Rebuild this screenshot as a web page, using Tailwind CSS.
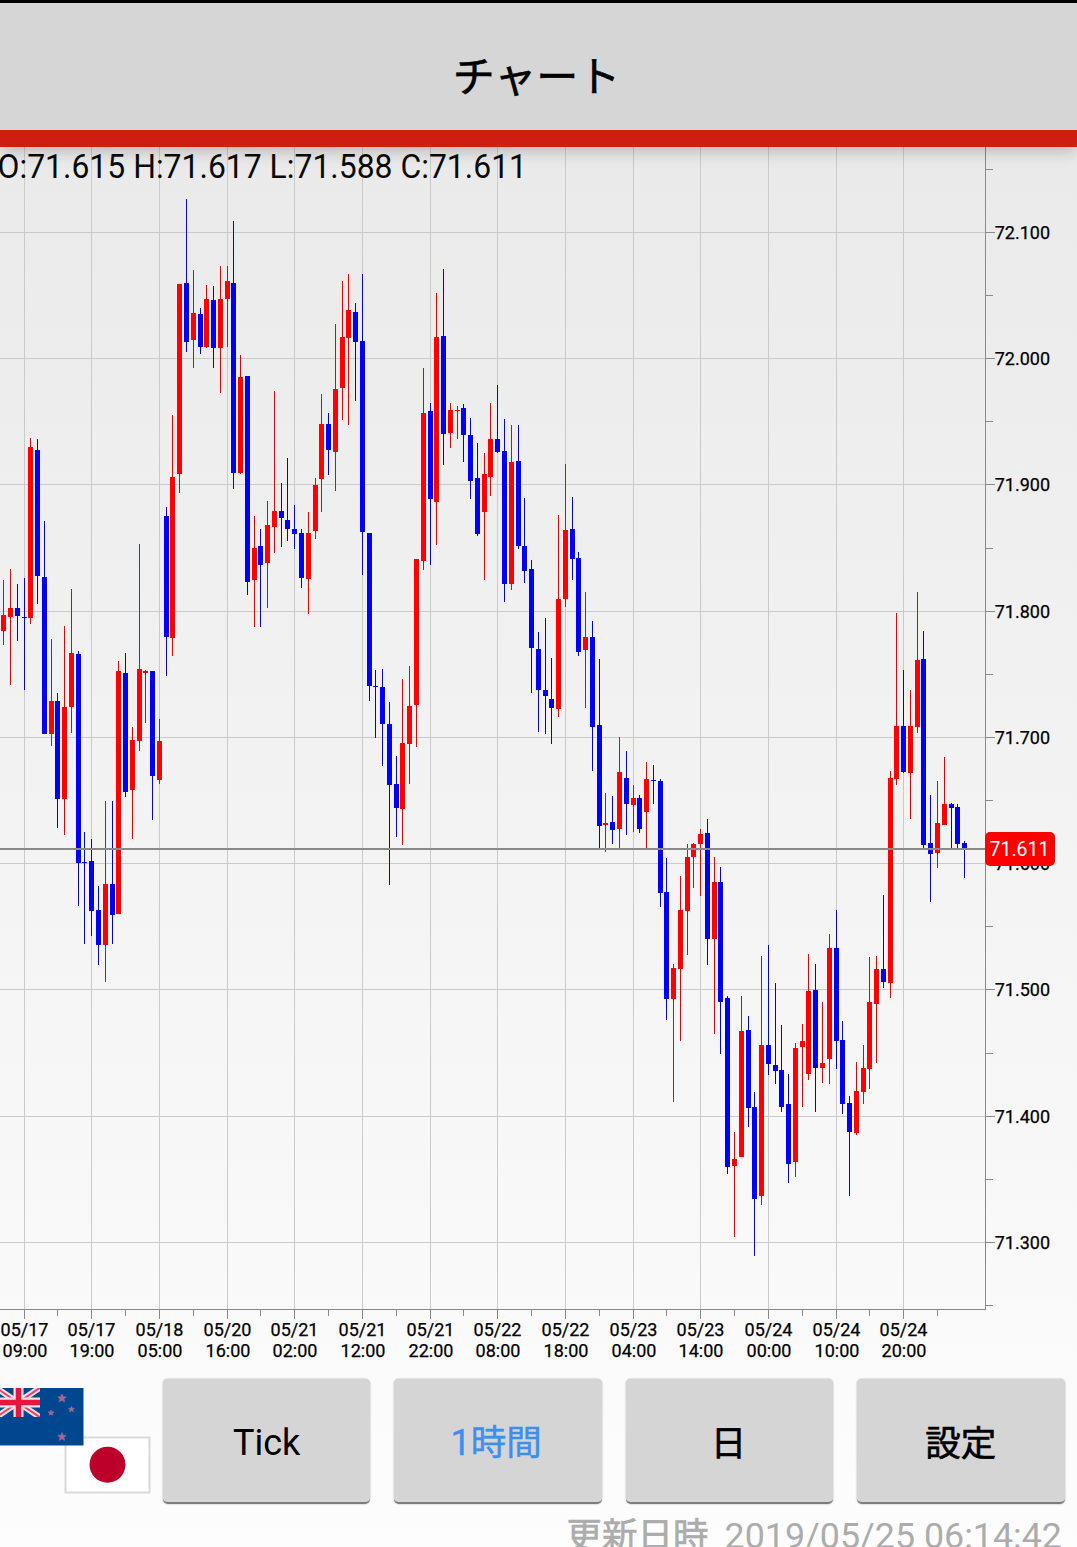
<!DOCTYPE html>
<html lang="ja">
    <head>
        <meta charset="UTF-8">
        <title>チャート</title>
        <script src="https://cdn.jsdelivr.net/npm/@tailwindcss/browser@4"></script>
    </head>
    <body class="bg-white">
        <div id="main" class="flex flex-col w-[1077px] h-[1547px] overflow-hidden bg-linear-to-b from-[#e8e8e8] to-[#fdfdfd] font-['Roboto','Noto_Sans_CJK_JP',sans-serif] text-black">
            <header class="relative z-10 flex items-center justify-center h-[147px] shrink-0 bg-[#d6d6d6] border-t-3 border-t-black border-b-[17px] border-b-[#d01d13] shadow-[0_3px_16px_rgba(0,0,0,0.25)]">
                <h1 class="text-[42px] leading-none pt-[22px] pr-[4px] [-webkit-text-stroke:0.6px_#000]">チャート</h1>
            </header>
            <svg id="chart" class="block shrink-0 w-[1077px] h-[1231px]" viewBox="0 147 1077 1231">
                <g id="grid" fill="#cacaca" shape-rendering="crispEdges"></g>
                <g id="candles" shape-rendering="crispEdges"></g>
                <g id="axis" fill="#8a8a8a" shape-rendering="crispEdges">
                    <rect x="985" y="147" width="1" height="1163"/>
                    <rect x="0" y="1309" width="986" height="1"/>
                    <rect x="0" y="848" width="986" height="2"/>
                </g>
                <g id="labels" font-size="18" fill="#000" stroke="#000" stroke-width=".25"></g>
                <rect x="985" y="832" width="70" height="34" rx="5" fill="#ff0000"/>
                <text x="1019.5" y="856" text-anchor="middle" font-size="19.5" fill="#fff">71.611</text>
                <text id="ohlc" x="-2.500" y="178" font-size="33" textLength="529.500" lengthAdjust="spacingAndGlyphs" fill="#0a0a0a">O:71.615 H:71.617 L:71.588 C:71.611</text>
            </svg>
            <footer class="flex shrink-0">
                <svg class="block shrink-0 w-[163px] h-[126px]" viewBox="0 1378 163 126">
                    <rect x="65.5" y="1437.5" width="84" height="55" fill="#fff" stroke="#d9d9d9" stroke-width="2"/>
                    <circle cx="107.5" cy="1464.7" r="18" fill="#bd0029"/>
                    <rect x="-3" y="1388" width="86.5" height="57.5" fill="#00478f"/>
                    <svg x="-3" y="1388" width="43" height="29" viewBox="0 0 43 29" preserveAspectRatio="none">
                        <path d="M-2 -1L44 30M-2 30L44 -1" stroke="#f3dce4" stroke-width="6"/>
                        <path d="M-2 -1L44 30M-2 30L44 -1" stroke="#e8476a" stroke-width="2"/>
                        <path d="M21.5 0V29M0 14.5H43" stroke="#f6e3ea" stroke-width="10"/>
                        <path d="M21.5 0V29M0 14.5H43" stroke="#e8163c" stroke-width="5.5"/>
                    </svg>
                    <g id="stars" fill="#d0567c" stroke="#6f7fb0" stroke-width=".6">
                        <path d="M62 1394l1.200 2.700 3 .2-2.300 2 .8 3-2.700-1.600-2.700 1.600.8-3-2.300-2 3-.2z"/>
                        <path d="M71.500 1406.500l.9 1.800 2 .1-1.500 1.300.5 2-1.900-1-1.900 1 .5-2-1.500-1.300 2-.1z"/>
                        <path d="M51 1410l.9 1.800 2 .1-1.500 1.300.5 2-1.900-1-1.900 1 .5-2-1.500-1.300 2-.1z"/>
                        <path d="M62 1432.500l1.200 2.700 3 .2-2.300 2 .8 3-2.700-1.600-2.700 1.600.8-3-2.300-2 3-.2z"/>
                    </g>
                </svg>
                <div class="grid grid-cols-4 gap-6 w-[901.500px] pt-px text-[36px] leading-none">
                    <button class="h-[125px] pt-1 rounded-[5px] bg-[#d5d5d5] border-b-2 border-[#7d7d7d] shadow-[0_0_2px_rgba(0,0,0,0.35)]">Tick</button>
                    <button class="h-[125px] pt-1.5 pr-1 rounded-[5px] bg-[#d5d5d5] border-b-2 border-[#7d7d7d] shadow-[0_0_2px_rgba(0,0,0,0.35)] text-[#3c8fec] [-webkit-text-stroke:0.4px_#3c8fec]">1<span class="text-[35.500px]">時間</span></button>
                    <button class="h-[125px] pt-2 pr-0.5 rounded-[5px] bg-[#d5d5d5] border-b-2 border-[#7d7d7d] shadow-[0_0_2px_rgba(0,0,0,0.35)] text-[35.500px] [-webkit-text-stroke:0.6px_#000]">日</button>
                    <button class="h-[125px] pt-2 rounded-[5px] bg-[#d5d5d5] border-b-2 border-[#7d7d7d] shadow-[0_0_2px_rgba(0,0,0,0.35)] text-[35.500px] [-webkit-text-stroke:0.6px_#000]">設定</button>
                </div>
            </footer>
            <div class="flex justify-end items-baseline gap-4 shrink-0 pt-3 pr-[15px] text-[35.800px] leading-[40px] text-[#acacac]">
                <span class="text-[35.500px] [-webkit-text-stroke:0.6px_#acacac]">更新日時</span>
                <span>2019/05/25 06:14:42</span>
            </div>
        </div>
        <script>
            // one candle per hour: up (1) or down (0), then the y of high, body top, body bottom, low
            var candles = [
                [1,580,615,631,645],[1,569,608,617,685],[0,584,608,616,641],[0,578,617,618,690],[1,438,447,618,624],
                [0,439,450,576,604],[0,521,577,734,734],[1,639,701,734,746],[0,693,701,799,828],[1,626,707,799,835],
                [1,589,653,707,733],[0,651,654,863,906],[0,832,862,863,944],[0,839,861,911,936],[0,886,910,945,965],
                [1,801,884,945,982],[0,801,884,915,944],[1,661,671,914,914],[0,653,673,792,797],[1,727,740,790,839],
                [1,544,669,741,751],[1,670,671,673,723],[0,671,671,776,820],[1,719,741,780,784],[0,507,516,637,676],
                [1,415,477,638,656],[1,284,284,474,493],[0,199,283,342,352],[1,270,313,340,368],[0,308,314,347,354],
                [1,285,299,347,348],[0,286,300,348,368],[1,266,299,348,393],[1,266,281,299,347],[0,221,283,473,489],
                [1,355,377,473,474],[0,376,376,582,595],[1,516,548,580,627],[0,529,546,565,627],[1,501,525,563,608],
                [1,391,511,527,553],[0,483,511,518,547],[0,458,520,529,541],[0,505,529,534,549],[0,529,533,578,588],
                [1,512,533,579,614],[1,478,485,531,539],[1,394,424,479,512],[0,413,424,450,475],[1,324,389,452,491],
                [1,281,337,388,420],[1,274,310,338,425],[0,303,312,342,401],[0,274,341,532,575],[0,533,533,686,701],
                [0,670,686,687,738],[0,669,687,724,766],[0,702,724,785,885],[0,756,784,808,837],[1,679,743,809,845],
                [1,666,706,744,784],[1,559,559,705,747],[1,368,413,561,570],[0,403,411,499,565],[1,293,337,502,545],
                [0,269,336,434,465],[1,403,410,433,448],[1,406,410,411,439],[0,404,408,435,462],[0,418,435,481,499],
                [0,443,478,534,536],[1,453,474,512,580],[1,403,439,477,496],[0,385,439,452,453],[0,419,451,584,602],
                [1,425,462,584,590],[0,425,461,546,549],[0,498,546,571,583],[0,560,569,648,693],[0,632,649,690,732],
                [0,618,690,696,734],[0,658,699,708,744],[1,515,599,709,717],[1,464,530,599,607],[0,497,529,559,580],
                [0,552,558,652,656],[1,592,637,650,708],[0,621,637,727,771],[0,659,725,826,848],[1,793,823,825,852],
                [0,796,822,830,844],[1,737,772,829,848],[0,751,778,804,835],[1,785,798,805,832],[0,795,798,829,833],
                [1,762,779,812,848],[0,765,780,781,804],[0,779,781,893,907],[0,858,892,999,1020],[1,964,968,999,1102],
                [1,876,910,969,1041],[1,844,857,911,955],[1,843,844,857,888],[1,829,834,844,896],[0,819,833,939,965],
                [1,857,882,939,1034],[0,867,882,1002,1054],[0,996,998,1167,1174],[1,1132,1159,1166,1237],[1,996,1031,1157,1157],
                [0,1016,1030,1108,1127],[0,1092,1107,1199,1256],[1,956,1045,1196,1205],[0,945,1045,1064,1075],[0,983,1065,1071,1084],
                [0,1025,1070,1107,1112],[0,1074,1104,1164,1183],[1,1043,1048,1162,1177],[1,1024,1041,1047,1107],[1,954,991,1074,1080],
                [0,964,990,1068,1112],[1,1002,1063,1068,1083],[1,934,948,1059,1084],[0,910,948,1041,1069],[0,1021,1040,1104,1114],
                [0,1096,1103,1132,1196],[1,1062,1091,1133,1135],[1,1045,1068,1092,1104],[1,957,1002,1069,1089],[1,956,969,1004,1063],
                [0,895,969,982,988],[1,771,778,983,998],[1,613,726,779,785],[0,670,726,772,773],[1,690,726,773,819],
                [1,592,660,727,733],[0,631,659,845,848],[0,795,843,854,902],[1,781,823,853,868],[1,757,804,825,825],
                [0,803,804,808,848],[0,804,807,844,848],[0,841,843,848,878]
            ];
            var times = ["05/17 09:00", "05/17 19:00", "05/18 05:00", "05/20 16:00", "05/21 02:00", "05/21 12:00", "05/21 22:00",
                "05/22 08:00", "05/22 18:00", "05/23 04:00", "05/23 14:00", "05/24 00:00", "05/24 10:00", "05/24 20:00"];
            var grid = "", ticks = "", labels = "", bars = "";

            function xOf(k){
                return Math.floor(24.09 + 6.766 * k);
            }
            function rect(x, y, w, h, fill){
                return `<rect x="${x}" y="${y}" width="${w}" height="${h}"${fill ? ` fill="${fill}"` : ""}/>`;
            }

            for(var i = 0; i < 9; i++){
                var y = Math.floor(232.3 + 126.27 * i);
                grid += rect(0, y, 985, 1);
                ticks += rect(985, y, 10, 1);
                labels += `<text x="994.7" y="${y + 7.4}">${(72.1 - i / 10).toFixed(3)}</text>`;
            }
            for(var i = 0; i < 10; i++){
                ticks += rect(985, Math.floor(169.2 + 126.27 * i), 8, 1);
            }
            for(var i = 0; i < times.length; i++){
                var x = xOf(i * 10);
                var t = times[i].split(" ");
                grid += rect(x, 147, 1, 1162);
                ticks += rect(x, 1309, 1, 10) + rect(xOf(i * 10 + 5), 1309, 1, 7);
                labels += `<text x="${x + .5}" y="1336" text-anchor="middle">${t[0]}</text>`;
                labels += `<text x="${x + 1}" y="1357" text-anchor="middle">${t[1]}</text>`;
            }
            for(var i = 0; i < candles.length; i++){
                var c = candles[i];
                var x = xOf(i - 3);
                bars += rect(x, c[1], 1, c[4] - c[1], c[0] ? "#e60000" : "#0000d8");
                bars += rect(x - 2, c[2], 5, c[3] - c[2], c[0] ? "#ff0000" : "#0000f5");
            }
            document.querySelector("#grid").innerHTML = grid;
            document.querySelector("#candles").innerHTML = bars;
            document.querySelector("#axis").innerHTML += ticks;
            document.querySelector("#labels").innerHTML = labels;
        </script>
    </body>
</html>
